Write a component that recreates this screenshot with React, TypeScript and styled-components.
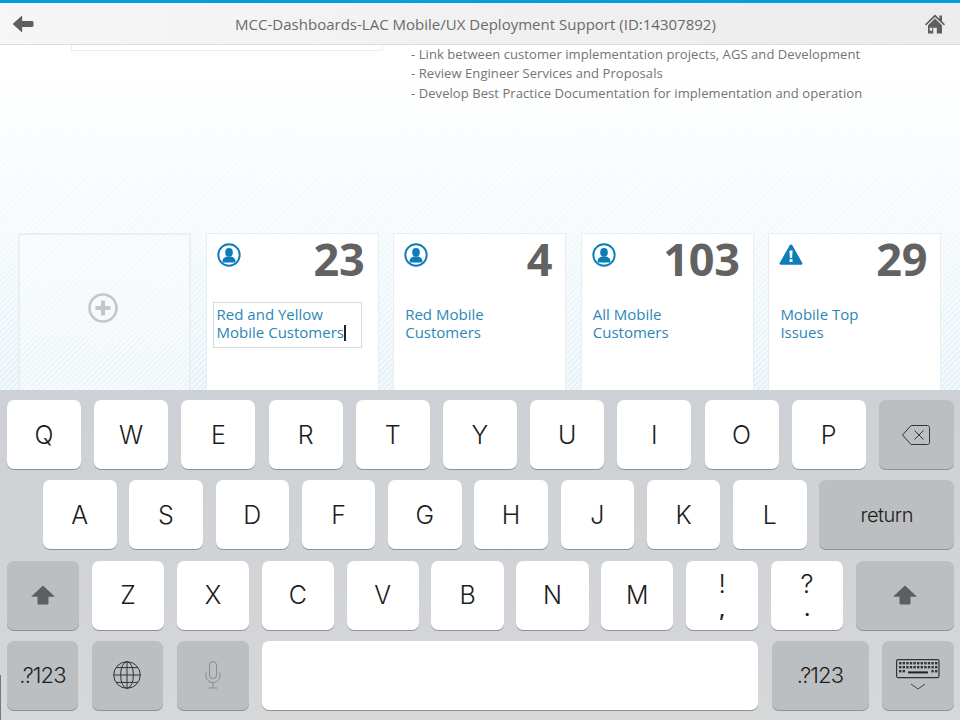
import React from 'react';
import styled, { createGlobalStyle } from 'styled-components';

const GlobalStyle = createGlobalStyle`
  html, body {
    margin: 0;
    padding: 0;
    background: #fff;
  }
  #root {
    width: 960px;
    height: 720px;
    overflow: hidden;
  }
`;

// Page shell
const Screen = styled.div`
  width: 960px;
  height: 720px;
  display: flex;
  flex-direction: column;
  font-family: 'Open Sans', sans-serif;
`;

const Header = styled.header`
  height: 41px;
  flex: none;
  display: flex;
  align-items: center;
  justify-content: space-between;
  padding: 0 15px 0 12px;
  border-top: 3px solid #0a9bdf;
  border-bottom: 1px solid #dcdcdc;
  background: linear-gradient(to right, #f6f6f6, #ececec);
  position: relative;
  z-index: 1;
`;

const Title = styled.div`
  font-size: 15px;
  letter-spacing: 0.01px;
  color: #6a6a6a;
  margin-right: 8px;
`;

const Content = styled.main`
  flex: 1;
  min-height: 0;
  overflow: hidden;
  background:
    repeating-linear-gradient(135deg, rgba(255, 255, 255, 0.55) 0 2px, transparent 2px 4px),
    linear-gradient(to bottom, #ffffff 8%, #e6f2f8 100%);
`;

const TopRow = styled.section`
  height: 188px;
  display: flex;
  align-items: flex-start;
  padding-left: 71px;
`;

const CardStub = styled.div`
  width: 310px;
  height: 5px;
  flex: none;
  background: #fff;
  border: 1px solid #eeeeee;
  border-top: none;
  margin-right: 28px;
`;

const Notes = styled.ul`
  list-style: none;
  margin: -0.5px 0 0;
  padding: 0;
  font-size: 13px;
  letter-spacing: 0.07px;
  line-height: 19.5px;
  color: #737373;
`;

const TileRow = styled.section`
  display: flex;
  gap: 14.6px;
  padding-left: 18px;
`;

const Tile = styled.article`
  width: 173px;
  height: 200px;
  flex: none;
  box-sizing: border-box;
  background: #fff;
  border: 1px solid #e6eef2;
  padding: 9px 13px 0 10px;
`;

const AddTile = styled(Tile)`
  display: flex;
  align-items: flex-start;
  justify-content: center;
  padding: 58px 4px 0 0;
  background: rgba(255, 255, 255, 0.3);
  border: 2px solid #e8f0f4;
`;

const TileTop = styled.div`
  display: flex;
  justify-content: space-between;
  align-items: flex-start;
  height: 58px;
`;

const Count = styled.div`
  font-size: 45px;
  font-weight: 700;
  line-height: 32px;
  color: #626262;
  letter-spacing: -0.2px;
`;

const TileLabel = styled.div`
  font-size: 15px;
  line-height: 18.5px;
  color: #2c87b6;
  padding-left: 1px;
  padding-top: 3.5px;
`;

const EditLabel = styled(TileLabel)`
  box-sizing: border-box;
  width: 149px;
  height: 45.5px;
  margin: 1px 0 0 -4px;
  padding: 1.5px 0 0 3px;
  border: 1px solid #d6dadd;
  white-space: nowrap;
`;

const Caret = styled.span`
  display: inline-block;
  width: 2px;
  height: 16px;
  margin-left: 0;
  background: #222;
  vertical-align: -3px;
`;

// Keyboard
const Keyboard = styled.section`
  height: 330px;
  flex: none;
  box-sizing: border-box;
  padding: 10px 6px 0 7px;
  display: flex;
  flex-direction: column;
  gap: 11.3px;
  background:
    linear-gradient(#777a7d, #777a7d) no-repeat 0 285px / 1px 45px,
    linear-gradient(to bottom, #cdd0d4, #d5d7d9);
  font-family: Inter, 'Liberation Sans', sans-serif;
`;

const KeyRow = styled.div<{ $gap: number; $inset?: number }>`
  display: flex;
  gap: ${(p) => p.$gap}px;
  padding-left: ${(p) => p.$inset ?? 0}px;
`;

const Key = styled.div<{ $width: number; $dark?: boolean }>`
  width: ${(p) => p.$width}px;
  height: 69px;
  flex: none;
  display: flex;
  flex-direction: column;
  align-items: center;
  justify-content: center;
  border-radius: 7px;
  background: ${(p) => (p.$dark ? '#bcbfc2' : '#ffffff')};
  box-shadow: 0 1px 0 #8f9194;
  color: #1c1c1c;
  font-size: 25px;
  font-weight: 300;
`;

const WordKey = styled(Key)`
  font-size: 20px;
  letter-spacing: -0.5px;
`;

const SymbolKey = styled(WordKey)`
  font-size: 22px;
  letter-spacing: -0.9px;
`;

const Upper = styled.span`
  font-size: 26px;
  line-height: 24px;
`;

const Lower = styled.span`
  font-size: 20px;
  font-weight: 600;
  line-height: 20px;
  margin-top: 3px;
`;

const UserIcon = () => (
  <svg width="24" height="24" viewBox="0 0 24 24">
    <circle cx="12" cy="12" r="10.7" fill="none" stroke="#0a7dba" strokeWidth="1.9" />
    <ellipse cx="12" cy="9.4" rx="3.8" ry="4.4" fill="#0a7dba" />
    <path d="M5.5 18.6c0-3.2 2.6-4.6 4.4-5h4.2c1.8.4 4.4 1.8 4.4 5 0 .6-.6 1-1.4 1H6.9c-.8 0-1.4-.4-1.4-1z" fill="#0a7dba" />
  </svg>
);

const WarningIcon = () => (
  <svg width="24" height="24" viewBox="0 0 24 24">
    <path
      d="M12 1.5c.6 0 1 .3 1.3.8l10 17.6c.5.9 0 1.8-1 1.8H1.7c-1 0-1.5-.9-1-1.8l10-17.6c.3-.5.7-.8 1.3-.8z"
      fill="#0a7dba"
    />
    <path d="M10.4 7.5h3.2l-.5 7.6h-2.2z" fill="#fff" />
    <rect x="10.5" y="16.2" width="3" height="2.9" fill="#fff" />
  </svg>
);

const PlusCircle = () => (
  <svg width="30" height="30" viewBox="0 0 30 30">
    <circle cx="15" cy="15" r="13.5" fill="none" stroke="#c3c7c9" strokeWidth="2.6" />
    <path d="M15 7.5v15M7.5 15h15" stroke="#c3c7c9" strokeWidth="4" />
  </svg>
);

const BackArrow = () => (
  <svg width="22" height="18" viewBox="0 0 22 18">
    <path
      d="M9.2 1.2L1.2 8.4c-.4.4-.4.9 0 1.2l8 7.2c.4.4 1 .1 1-.4V12h9.9c.8 0 1.4-.6 1.4-1.4V7.4c0-.8-.6-1.4-1.4-1.4h-9.9V1.6c0-.5-.6-.8-1-.4z"
      fill="#5f5f5f"
    />
  </svg>
);

const HomeIcon = () => (
  <svg width="20" height="20" viewBox="0 0 20 20">
    <path
      d="M10 .6L0 10.2l1 1.2L10 3l9 8.4 1-1.2-3-2.9V1.6h-2.6v3.2z"
      fill="#5f5f5f"
    />
    <path
      fillRule="evenodd"
      d="M3 11.2L10 4.6l7 6.6v8.2h-5.2v-5.6h-3.6v5.6H3zM4.8 13.8v3h2.4v-3z"
      fill="#5f5f5f"
    />
  </svg>
);

const DeleteIcon = () => (
  <svg width="30" height="22" viewBox="0 0 30 22" fill="none" stroke="#333" strokeWidth="1">
    <path d="M10 1.5h16.5c1.1 0 2 .9 2 2v15c0 1.1-.9 2-2 2H10L1.5 11z" />
    <path d="M13.5 6.5l9 9M22.5 6.5l-9 9" />
  </svg>
);

const ShiftIcon = () => (
  <svg width="24" height="20" viewBox="0 0 24 20">
    <path
      d="M12 .5L.5 11.2c-.2.3 0 .6.3.6h5.7v6.4c0 .8.6 1.3 1.3 1.3h8.4c.7 0 1.3-.5 1.3-1.3v-6.4h5.7c.3 0 .5-.3.3-.6z"
      fill="#5e5f61"
    />
  </svg>
);

const GlobeIcon = () => (
  <svg width="28" height="28" viewBox="0 0 28 28" fill="none" stroke="#333" strokeWidth="1">
    <circle cx="14" cy="14" r="13.3" />
    <ellipse cx="14" cy="14" rx="6.4" ry="13.3" />
    <path d="M14 .7v26.6M.7 14h26.6M3 6.6h22M3 21.4h22" />
  </svg>
);

const MicIcon = () => (
  <svg width="16" height="28" viewBox="0 0 16 28" fill="none" stroke="#8a8c8f" strokeWidth="1">
    <rect x="4.5" y=".7" width="7" height="17" rx="3.5" />
    <path d="M1 11.5v3c0 4 3 7 7 7s7-3 7-7v-3M8 21.5v5.5M3.5 27h9" />
  </svg>
);

const KEYBOARD_DOTS = [
  ...Array.from({ length: 11 }, (_, i) => ({ x: 3 + i * 3.6, y: 3 })),
  ...Array.from({ length: 11 }, (_, i) => ({ x: 3 + i * 3.6, y: 7 })),
  ...[0, 1, 9, 10].map((i) => ({ x: 3 + i * 3.6, y: 11 })),
];

const KeyboardIcon = () => (
  <svg width="44" height="32" viewBox="0 0 44 32" fill="none">
    <rect x=".6" y=".6" width="42.4" height="18" rx="1.5" stroke="#333" strokeWidth="1.2" />
    {KEYBOARD_DOTS.map((d, i) => (
      <rect key={i} x={d.x} y={d.y} width="2.4" height="2.4" fill="#333" />
    ))}
    <rect x="12" y="12.4" width="20" height="2" fill="#222" />
    <path d="M15 25l7 5 7-5" stroke="#444" strokeWidth="1" />
  </svg>
);

const tiles = [
  { count: '23', label: 'Red and Yellow Mobile Customers', editing: true },
  { count: '4', label: 'Red Mobile Customers' },
  { count: '103', label: 'All Mobile Customers' },
  { count: '29', label: 'Mobile Top Issues', warning: true },
];

const labelLines: Record<string, string[]> = {
  'Red Mobile Customers': ['Red Mobile', 'Customers'],
  'All Mobile Customers': ['All Mobile', 'Customers'],
  'Mobile Top Issues': ['Mobile Top', 'Issues'],
};

export default function App() {
  return (
    <Screen>
      <GlobalStyle />
      <Header>
        <BackArrow />
        <Title>MCC-Dashboards-LAC Mobile/UX Deployment Support (ID:14307892)</Title>
        <HomeIcon />
      </Header>

      <Content>
        <TopRow>
          <CardStub />
          <Notes>
            <li>- Link between customer implementation projects, AGS and Development</li>
            <li>- Review Engineer Services and Proposals</li>
            <li>- Develop Best Practice Documentation for implementation and operation</li>
          </Notes>
        </TopRow>

        <TileRow>
          <AddTile as="div">
            <PlusCircle />
          </AddTile>
          {tiles.map((tile) => (
            <Tile key={tile.count}>
              <TileTop>
                {tile.warning ? <WarningIcon /> : <UserIcon />}
                <Count>{tile.count}</Count>
              </TileTop>
              {tile.editing ? (
                <EditLabel>
                  Red and Yellow
                  <br />
                  Mobile Customers
                  <Caret />
                </EditLabel>
              ) : (
                <TileLabel>
                  {labelLines[tile.label][0]}
                  <br />
                  {labelLines[tile.label][1]}
                </TileLabel>
              )}
            </Tile>
          ))}
        </TileRow>
      </Content>

      <Keyboard>
        <KeyRow $gap={13.2}>
          {['Q', 'W', 'E', 'R', 'T', 'Y', 'U', 'I', 'O', 'P'].map((k) => (
            <Key key={k} $width={74}>{k}</Key>
          ))}
          <Key $width={75} $dark>
            <DeleteIcon />
          </Key>
        </KeyRow>

        <KeyRow $gap={12.75} $inset={36}>
          {['A', 'S', 'D', 'F', 'G', 'H', 'J', 'K', 'L'].map((k) => (
            <Key key={k} $width={73.5}>{k}</Key>
          ))}
          <WordKey $width={135} $dark>return</WordKey>
        </KeyRow>

        <KeyRow $gap={12.7}>
          <Key $width={72.3} $dark>
            <ShiftIcon />
          </Key>
          {['Z', 'X', 'C', 'V', 'B', 'N', 'M'].map((k) => (
            <Key key={k} $width={72.2}>{k}</Key>
          ))}
          <Key $width={72.2}>
            <Upper>!</Upper>
            <Lower>,</Lower>
          </Key>
          <Key $width={72.2}>
            <Upper>?</Upper>
            <Lower>.</Lower>
          </Key>
          <Key $width={98} $dark>
            <ShiftIcon />
          </Key>
        </KeyRow>

        <KeyRow $gap={13.5}>
          <SymbolKey $width={71} $dark>.?123</SymbolKey>
          <Key $width={71.5} $dark>
            <GlobeIcon />
          </Key>
          <Key $width={72} $dark>
            <MicIcon />
          </Key>
          <Key $width={496} />
          <SymbolKey $width={97} $dark>.?123</SymbolKey>
          <Key $width={72} $dark>
            <KeyboardIcon />
          </Key>
        </KeyRow>
      </Keyboard>
    </Screen>
  );
}
